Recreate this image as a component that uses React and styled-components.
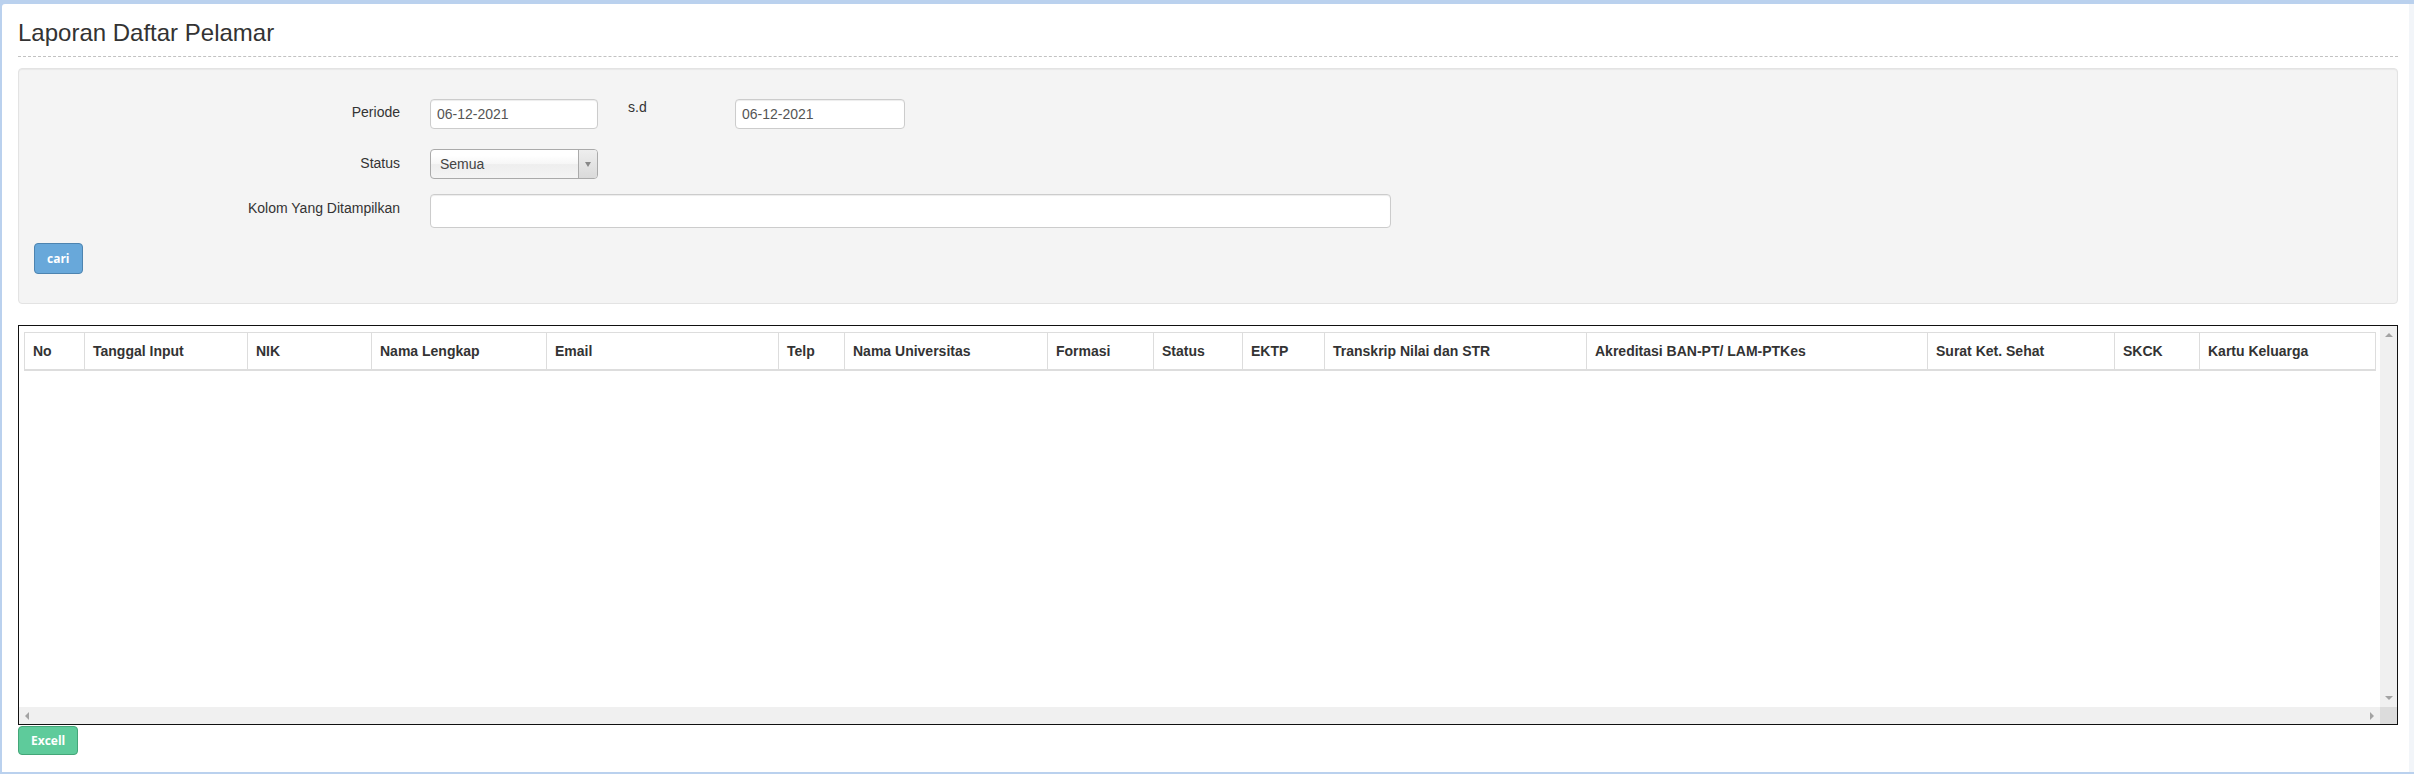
import React from 'react'
import styled, { createGlobalStyle } from 'styled-components'

const columns = [
  { label: 'No', width: 60 },
  { label: 'Tanggal Input', width: 163 },
  { label: 'NIK', width: 124 },
  { label: 'Nama Lengkap', width: 175 },
  { label: 'Email', width: 232 },
  { label: 'Telp', width: 66 },
  { label: 'Nama Universitas', width: 203 },
  { label: 'Formasi', width: 106 },
  { label: 'Status', width: 89 },
  { label: 'EKTP', width: 82 },
  { label: 'Transkrip Nilai dan STR', width: 262 },
  { label: 'Akreditasi BAN-PT/ LAM-PTKes', width: 341 },
  { label: 'Surat Ket. Sehat', width: 187 },
  { label: 'SKCK', width: 85 },
  { label: 'Kartu Keluarga', width: 176 }
]

const GlobalStyle = createGlobalStyle`
  html, body {
    margin: 0;
    padding: 0;
    background: #bad1ee;
  }
  body {
    font-family: "Liberation Sans", Arial, sans-serif;
    font-size: 14px;
    color: #333;
  }
`

const Page = styled.div`
  margin: 4px 0 2px 2px;
  height: 768px;
  box-sizing: border-box;
  background: #fff;
  border-right: 5px solid #f2f5f9;
  border-top-left-radius: 3px;
  padding: 16px 11px 0 16px;
`

const Title = styled.h3`
  margin: 0;
  font-size: 24px;
  font-weight: 400;
  line-height: 26px;
  color: #333;
  padding-bottom: 10px;
  border-bottom: 1px dashed #c2c2c2;
`

const Well = styled.div`
  margin-top: 11px;
  background: #f4f4f4;
  border: 1px solid #e3e3e3;
  border-radius: 4px;
  box-shadow: inset 0 1px 1px rgba(0, 0, 0, 0.05);
  padding: 30px 15px 29px;
`

const FormRow = styled.div`
  display: flex;
  align-items: flex-start;
  margin-top: ${props => props.$gap || 0}px;
`

const Label = styled.label`
  width: 366px;
  margin-right: 30px;
  padding-top: ${props => props.$top}px;
  text-align: right;
  line-height: 20px;
  font-size: 14px;
  color: #333;
`

const RangeLabel = styled.span`
  width: 107px;
  margin-left: 30px;
  margin-top: -2px;
  line-height: 20px;
  color: #333;
`

const TextInput = styled.input`
  box-sizing: border-box;
  width: ${props => props.$w}px;
  height: ${props => props.$h || 30}px;
  margin: 0;
  padding: 0 6px;
  border: 1px solid #ccc;
  border-radius: 4px;
  background: #fff;
  box-shadow: inset 0 1px 1px rgba(0, 0, 0, 0.075);
  font-family: "Liberation Sans", Arial, sans-serif;
  font-size: 14px;
  color: #555;
  outline: none;
`

const Select = styled.div`
  display: flex;
  box-sizing: border-box;
  width: 168px;
  height: 30px;
  border: 1px solid #aaa;
  border-radius: 4px;
  overflow: hidden;
  background: linear-gradient(#fff 20%, #f6f6f6 50%, #eee 52%, #f4f4f4 100%);
`

const SelectText = styled.span`
  flex: 1;
  padding-left: 9px;
  line-height: 28px;
  color: #444;
`

const SelectArrow = styled.span`
  width: 18px;
  display: flex;
  align-items: center;
  justify-content: center;
  border-left: 1px solid #aaa;
  background: linear-gradient(#eee, #dadada);

  &::after {
    content: '';
    border-style: solid;
    border-width: 5px 3px 0 3px;
    border-color: #888 transparent transparent transparent;
  }
`

const Button = styled.button`
  display: block;
  margin: ${props => props.$mt || 0}px 0 0;
  padding: ${props => props.$py}px 12px;
  font-family: "Open Sans", sans-serif;
  font-weight: 700;
  font-size: 12px;
  line-height: 17px;
  color: #fff;
  background: ${props => props.$bg};
  border: 1px solid ${props => props.$border};
  border-radius: 4px;
  cursor: pointer;
`

const TableBox = styled.div`
  margin-top: 21px;
  border: 1px solid #111;
  display: grid;
  grid-template-columns: 1fr 17px;
  grid-template-rows: 381px 17px;
`

const ScrollBody = styled.div`
  overflow: hidden;
  padding: 6px 0 0 5px;
  background: #fff;
`

const Table = styled.table`
  border-collapse: collapse;
  table-layout: fixed;
  width: 2352px;
`

const HeadCell = styled.th`
  width: ${props => props.$w}px;
  box-sizing: border-box;
  border: 1px solid #ddd;
  border-bottom-width: 2px;
  padding: 8px;
  text-align: left;
  font-weight: 700;
  font-size: 14px;
  line-height: 20px;
  color: #333;
  white-space: nowrap;
`

const VScroll = styled.div`
  background: #f0f0f0;
  display: flex;
  flex-direction: column;
  justify-content: space-between;
  align-items: center;
  padding: 7px 0;
`

const HScroll = styled.div`
  background: #f0f0f0;
  display: flex;
  justify-content: space-between;
  align-items: center;
  padding: 0 6px;
`

const Corner = styled.div`
  background: #dcdcdc;
`

const arrowBorders = {
  up: ['0 4px 4px 4px', 'transparent transparent #a3a3a3 transparent'],
  down: ['4px 4px 0 4px', '#a3a3a3 transparent transparent transparent'],
  left: ['4px 4px 4px 0', 'transparent #a3a3a3 transparent transparent'],
  right: ['4px 0 4px 4px', 'transparent transparent transparent #a3a3a3']
}

const Arrow = styled.span`
  width: 0;
  height: 0;
  border-style: solid;
  border-width: ${props => arrowBorders[props.$dir][0]};
  border-color: ${props => arrowBorders[props.$dir][1]};
`

const App = () => {
  return (
    <>
      <GlobalStyle />
      <Page>
        <Title>Laporan Daftar Pelamar</Title>
        <Well>
          <FormRow>
            <Label $top={3}>Periode</Label>
            <TextInput $w={168} defaultValue='06-12-2021' />
            <RangeLabel>s.d</RangeLabel>
            <TextInput $w={170} defaultValue='06-12-2021' />
          </FormRow>
          <FormRow $gap={20}>
            <Label $top={4}>Status</Label>
            <Select>
              <SelectText>Semua</SelectText>
              <SelectArrow />
            </Select>
          </FormRow>
          <FormRow $gap={15}>
            <Label $top={4}>Kolom Yang Ditampilkan</Label>
            <TextInput $w={961} $h={34} />
          </FormRow>
          <Button $mt={15} $py={6} $bg='#68a8da' $border='#4d84b0'>cari</Button>
        </Well>
        <TableBox>
          <ScrollBody>
            <Table>
              <thead>
                <tr>
                  {columns.map(col => (
                    <HeadCell key={col.label} $w={col.width}>{col.label}</HeadCell>
                  ))}
                </tr>
              </thead>
              <tbody />
            </Table>
          </ScrollBody>
          <VScroll>
            <Arrow $dir='up' />
            <Arrow $dir='down' />
          </VScroll>
          <HScroll>
            <Arrow $dir='left' />
            <Arrow $dir='right' />
          </HScroll>
          <Corner />
        </TableBox>
        <Button $mt={1} $py={5} $bg='#5ecb9b' $border='#44a678'>Excell</Button>
      </Page>
    </>
  )
}

export default App
